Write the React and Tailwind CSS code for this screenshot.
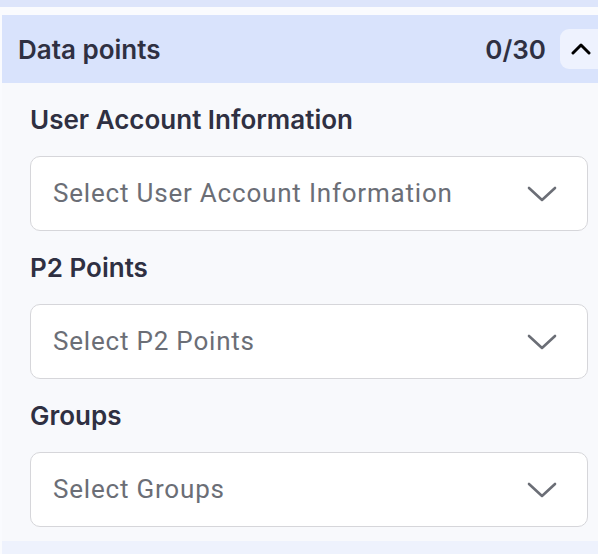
function ChevronDown() {
    return (
        <svg width="30" height="16" viewBox="0 0 30 16" fill="none" className="shrink-0">
            <polyline points="2,2 15,14 28,2" stroke="#6b6e76" strokeWidth="2.6" strokeLinecap="round" strokeLinejoin="round" />
        </svg>
    );
}

function Field({ label, placeholder }) {
    return (
        <div>
            <p className="text-[26px] font-semibold leading-[30px] text-[#2f3042] [font-family:Inter,sans-serif]">
                {label}
            </p>
            <div className="mt-[21px] flex h-[75px] items-center justify-between rounded-[10px] border border-[#d6d6da] bg-white pl-[22px] pr-[30px]">
                <span className="text-[26px] tracking-[0.8px] text-[#6b6e76] [font-family:Roboto,sans-serif]">
                    {placeholder}
                </span>
                <ChevronDown />
            </div>
        </div>
    );
}

export default function App() {
    return (
        <div className="h-[554px] w-[598px] overflow-hidden bg-[#fafbfe]">
            <div className="h-[7px] bg-[#dde5fb]" />
            <div className="ml-[2px] mt-[8px]">
                <div className="flex h-[68px] items-center justify-between bg-[#d9e3fc] pl-[16px]">
                    <span className="text-[26px] font-semibold text-[#2f3042] [font-family:Inter,sans-serif]">
                        Data points
                    </span>
                    <div className="flex items-center gap-[14px]">
                        <span className="text-[26px] font-semibold text-[#2f3042] [font-family:Inter,sans-serif]">
                            0/30
                        </span>
                        <div className="flex h-[40px] w-[38px] items-center justify-start rounded-l-[9px] bg-[#eef2fe] pl-[11px]">
                            <svg width="20" height="12" viewBox="0 0 20 12" fill="none">
                                <polyline points="2,10 10,2 18,10" stroke="#000" strokeWidth="3" strokeLinecap="round" strokeLinejoin="round" />
                            </svg>
                        </div>
                    </div>
                </div>
                <div className="flex flex-col gap-[22px] bg-[#f8f9fc] pb-[14px] pl-[28px] pr-[10px] pt-[22px]">
                    <Field label="User Account Information" placeholder="Select User Account Information" />
                    <Field label="P2 Points" placeholder="Select P2 Points" />
                    <Field label="Groups" placeholder="Select Groups" />
                </div>
                <div className="h-[20px] bg-[#eef2fd]" />
            </div>
        </div>
    );
}
